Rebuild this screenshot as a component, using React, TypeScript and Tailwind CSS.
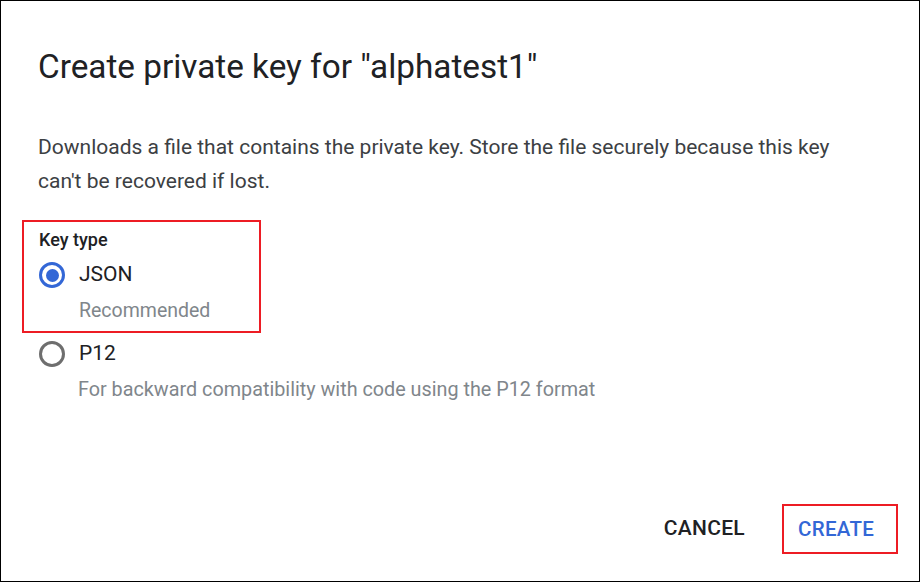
export default function App() {
  return (
    <div className="w-[921px] h-[583px] bg-white">
      <div className="w-[920px] h-[582px] border border-black bg-white flex flex-col pl-[37px] pr-[21px] pt-[46px] pb-[27px] font-['Roboto',sans-serif]">
        <h1 className="text-[33.3px] leading-[40px] text-[#202124]">Create private key for "alphatest1"</h1>

        <p className="mt-[43px] text-[21px] leading-[34px] text-[#3c4043]">
          Downloads a file that contains the private key. Store the file securely because this key
          <br />
          can't be recovered if lost.
        </p>

        {/* highlighted key type group */}
        <div className="mt-[22px] -ml-[16px] w-[239px] border-2 border-[#ed1c24] pl-[15px] pt-[8px] pb-[8px]">
          <div className="text-[18px] leading-[20px] font-medium text-[#202124]">Key type</div>
          <label className="mt-[11px] flex items-center gap-[14px] h-[28px]">
            <span className="w-[26px] h-[26px] rounded-full border-[3px] border-[#3367d6] flex items-center justify-center">
              <span className="w-[13px] h-[13px] rounded-full bg-[#3367d6]" />
            </span>
            <span className="text-[21px] text-[#202124]">JSON</span>
          </label>
          <div className="mt-[10px] pl-[40px] text-[19.5px] leading-[24px] text-[#80868b]">Recommended</div>
        </div>

        <label className="mt-[7px] flex items-center gap-[14px] h-[28px] pl-[1px]">
          <span className="w-[26px] h-[26px] rounded-full border-[3px] border-[#6e6e6e]" />
          <span className="text-[21px] text-[#202124]">P12</span>
        </label>
        <div className="mt-[10px] pl-[40px] text-[19.8px] leading-[24px] text-[#80868b]">
          For backward compatibility with code using the P12 format
        </div>

        <div className="flex-1" />

        <div className="flex items-center justify-end">
          <button className="text-[21px] font-medium text-[#202124] tracking-[0.3px]">CANCEL</button>
          <button className="ml-[37px] w-[116px] h-[50px] border-2 border-[#ed1c24] flex items-center justify-start pl-[14px] text-[20.5px] font-medium text-[#3367d6] tracking-[0.3px]">
            CREATE
          </button>
        </div>
      </div>
    </div>
  );
}
